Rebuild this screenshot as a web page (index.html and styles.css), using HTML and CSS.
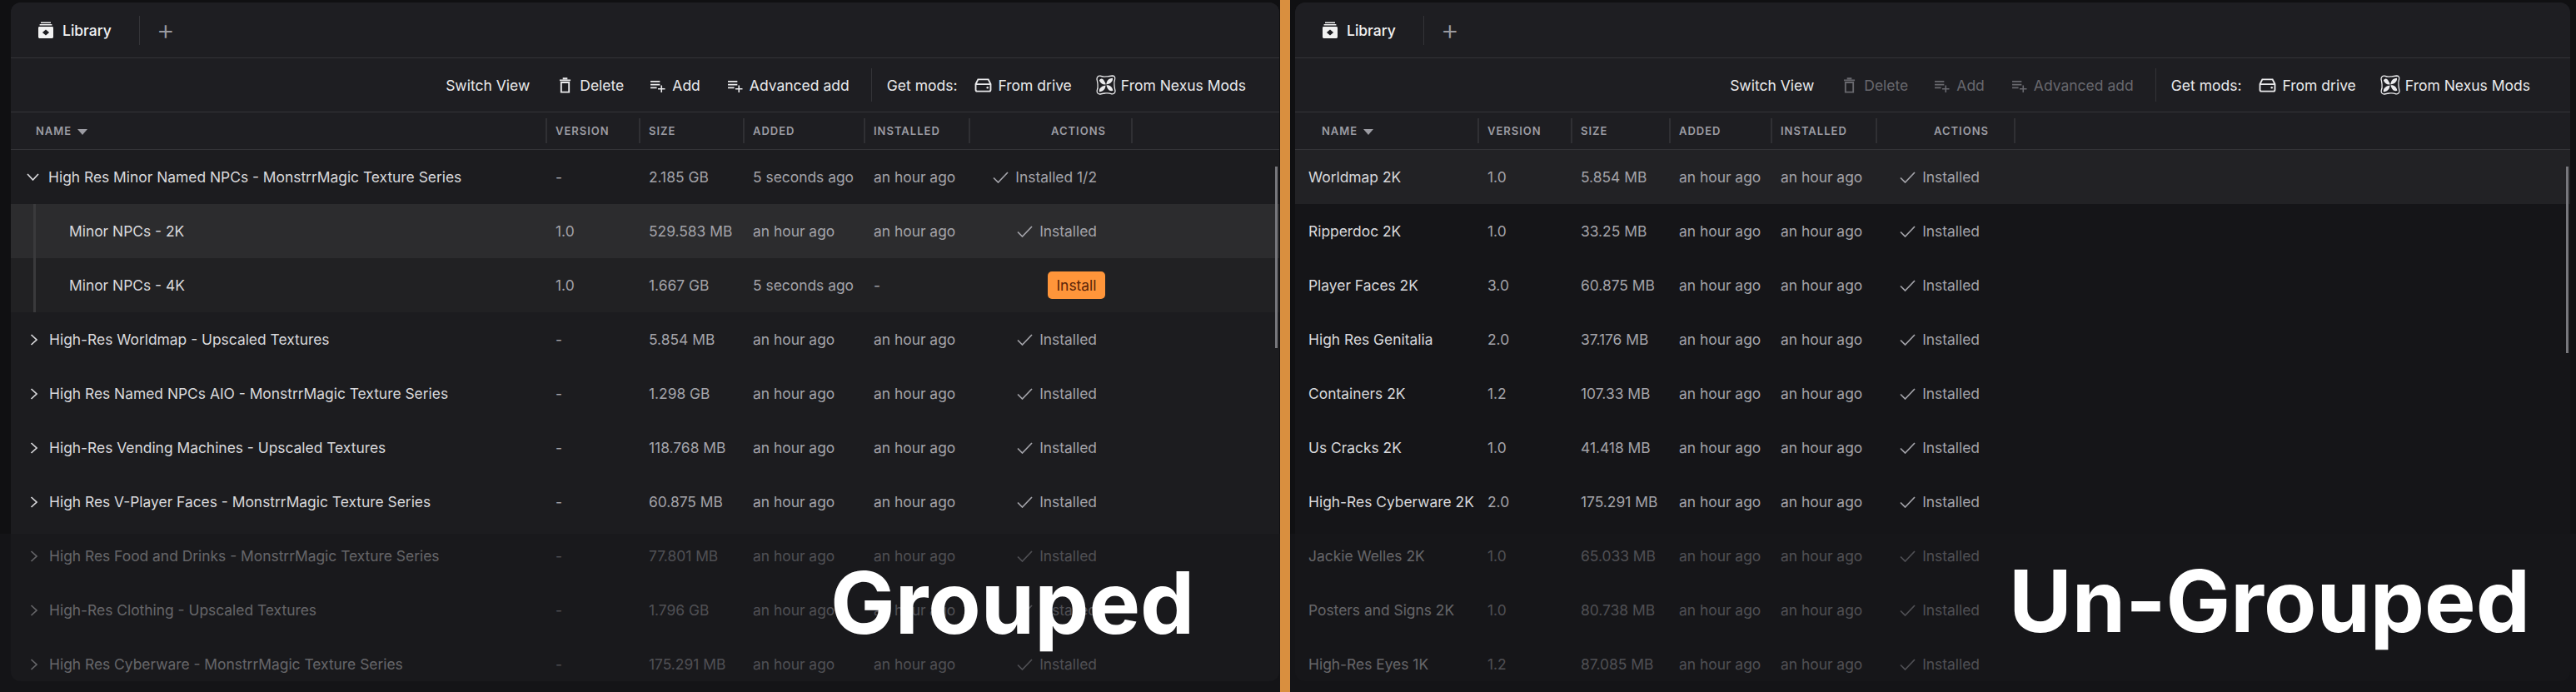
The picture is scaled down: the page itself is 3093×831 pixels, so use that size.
FILE: index.html
```html
<!DOCTYPE html>
<html>
 <head>
	<title>Library - grouped and un-grouped</title>
	<meta charset="UTF-8"/>
	<link rel="stylesheet" href="styles.css">
 </head>
 <body>
	<svg class="sprite" xmlns="http://www.w3.org/2000/svg">
		<symbol id="i-lib" viewBox="0 0 20 20"><path d="M4 0.5h12v1.4H4zM2.6 3h14.8v1.6H2.6z"/><path fill-rule="evenodd" d="M2 6h16a1.5 1.5 0 0 1 1 1.4V18.6A1.4 1.4 0 0 1 17.6 20H2.4A1.4 1.4 0 0 1 1 18.6V7.4A1.5 1.5 0 0 1 2 6zM10 9.4L5.9 13L10 16.6L14.1 13z"/></symbol>
		<symbol id="i-del" viewBox="0 0 16 20"><path d="M1 3.5h14M5 1.2h6M3 6.2h10V18.6H3z" fill="none" stroke="currentColor" stroke-width="2"/></symbol>
		<symbol id="i-add" viewBox="0 0 21 18"><path d="M1 3h12M1 7h12M1 11h8M15 8v9M10.5 12.5h9" fill="none" stroke="currentColor" stroke-width="1.7"/></symbol>
		<symbol id="i-drive" viewBox="0 0 22 18"><path d="M4.5 1.5h13L20.5 7.5V14.5a2 2 0 0 1-2 2H3.500a2 2 0 0 1-2-2V7.500zM1.500 7.500h19" fill="none" stroke="currentColor" stroke-width="2"/><circle cx="16.500" cy="12" r="1.300" fill="currentColor"/></symbol>
		<symbol id="i-nexus" viewBox="0 0 24 24"><path d="M5 1.200C8.500 2.600 11 2 13.500 1.800C15.500 1.600 17 1.400 19.500 1C22 1 23.200 2.800 22.600 5C21.400 8.500 21.800 11 22 13C22.200 15.500 22.600 17 23 19C23.200 21.800 21 23.200 18.800 22.800C15.500 21.400 13 21.800 11 22C8.500 22.200 7 22.600 5 23C2.400 23.200 .8 21.200 1.200 18.800C2.600 15.500 2.200 13 2 11C1.800 8.500 1.400 7 1 5C1 2.400 2.800 .8 5 1.200z" fill="none" stroke="currentColor" stroke-width="1.300"/><path d="M3.800 6.500C6 3.200 8.800 3.500 11.800 11.300C8.800 12 5.500 10.500 3.800 6.500zM12.300 11.500C12.800 7 15 4 20 3.800C20.600 7 18 11 12.300 11.500zM12.500 12.300C17 12 19.500 14.500 20.400 18.800C17 20.500 13.300 17.500 12.500 12.300zM11.500 12.600C11.300 17 9 19.800 4 20.600C3 17 6 13.300 11.500 12.600z" fill="currentColor"/></symbol>
		<symbol id="i-check" viewBox="0 0 19 14"><path d="M1 7.500L6.500 13L18 1" fill="none" stroke="currentColor" stroke-width="1.700"/></symbol>
		<symbol id="i-right" viewBox="0 0 10 14"><path d="M1.500 1L8 7L1.500 13" fill="none" stroke="currentColor" stroke-width="1.700"/></symbol>
		<symbol id="i-down" viewBox="0 0 15 9"><path d="M1 1L7.500 8L14 1" fill="none" stroke="currentColor" stroke-width="1.700"/></symbol>
	</svg>

	<div class="app">
		<!-- grouped view -->
		<div class="panel grouped">
			<div class="tabs">
				<div class="tab"><svg class="ico-lib"><use href="#i-lib"/></svg>Library</div>
				<div class="tab-plus">+</div>
			</div>
			<div class="toolbar">
				<span class="tool switch">Switch View</span>
				<span class="tool del"><svg class="ico-del"><use href="#i-del"/></svg>Delete</span>
				<span class="tool add"><svg class="ico-add"><use href="#i-add"/></svg>Add</span>
				<span class="tool adv"><svg class="ico-add"><use href="#i-add"/></svg>Advanced add</span>
				<span class="tool getmods">Get mods:</span>
				<span class="tool drive"><svg class="ico-drive"><use href="#i-drive"/></svg>From drive</span>
				<span class="tool nexus"><svg class="ico-nexus"><use href="#i-nexus"/></svg>From Nexus Mods</span>
			</div>
			<div class="row head">
				<div class="cell first">NAME <i class="sort"></i></div>
				<div class="cell">VERSION</div>
				<div class="cell">SIZE</div>
				<div class="cell">ADDED</div>
				<div class="cell">INSTALLED</div>
				<div class="cell act">ACTIONS</div>
			</div>
			<div class="row">
				<div class="cell name"><svg class="chev-down"><use href="#i-down"/></svg>High Res Minor Named NPCs - MonstrrMagic Texture Series</div>
				<div class="cell">-</div><div class="cell">2.185 GB</div><div class="cell">5 seconds ago</div><div class="cell">an hour ago</div>
				<div class="cell act"><span class="done"><svg class="check"><use href="#i-check"/></svg>Installed 1/2</span></div>
			</div>
			<div class="row child hover">
				<div class="cell name">Minor NPCs - 2K</div>
				<div class="cell">1.0</div><div class="cell">529.583 MB</div><div class="cell">an hour ago</div><div class="cell">an hour ago</div>
				<div class="cell act"><span class="done"><svg class="check"><use href="#i-check"/></svg>Installed</span></div>
			</div>
			<div class="row child">
				<div class="cell name">Minor NPCs - 4K</div>
				<div class="cell">1.0</div><div class="cell">1.667 GB</div><div class="cell">5 seconds ago</div><div class="cell">-</div>
				<div class="cell act"><button class="install">Install</button></div>
			</div>
			<div class="row">
				<div class="cell name"><svg class="chev"><use href="#i-right"/></svg>High-Res Worldmap - Upscaled Textures</div>
				<div class="cell">-</div><div class="cell">5.854 MB</div><div class="cell">an hour ago</div><div class="cell">an hour ago</div>
				<div class="cell act"><span class="done"><svg class="check"><use href="#i-check"/></svg>Installed</span></div>
			</div>
			<div class="row">
				<div class="cell name"><svg class="chev"><use href="#i-right"/></svg>High Res Named NPCs AIO - MonstrrMagic Texture Series</div>
				<div class="cell">-</div><div class="cell">1.298 GB</div><div class="cell">an hour ago</div><div class="cell">an hour ago</div>
				<div class="cell act"><span class="done"><svg class="check"><use href="#i-check"/></svg>Installed</span></div>
			</div>
			<div class="row">
				<div class="cell name"><svg class="chev"><use href="#i-right"/></svg>High-Res Vending Machines - Upscaled Textures</div>
				<div class="cell">-</div><div class="cell">118.768 MB</div><div class="cell">an hour ago</div><div class="cell">an hour ago</div>
				<div class="cell act"><span class="done"><svg class="check"><use href="#i-check"/></svg>Installed</span></div>
			</div>
			<div class="row">
				<div class="cell name"><svg class="chev"><use href="#i-right"/></svg>High Res V-Player Faces - MonstrrMagic Texture Series</div>
				<div class="cell">-</div><div class="cell">60.875 MB</div><div class="cell">an hour ago</div><div class="cell">an hour ago</div>
				<div class="cell act"><span class="done"><svg class="check"><use href="#i-check"/></svg>Installed</span></div>
			</div>
			<div class="row">
				<div class="cell name"><svg class="chev"><use href="#i-right"/></svg>High Res Food and Drinks - MonstrrMagic Texture Series</div>
				<div class="cell">-</div><div class="cell">77.801 MB</div><div class="cell">an hour ago</div><div class="cell">an hour ago</div>
				<div class="cell act"><span class="done"><svg class="check"><use href="#i-check"/></svg>Installed</span></div>
			</div>
			<div class="row">
				<div class="cell name"><svg class="chev"><use href="#i-right"/></svg>High-Res Clothing - Upscaled Textures</div>
				<div class="cell">-</div><div class="cell">1.796 GB</div><div class="cell">an hour ago</div><div class="cell">an hour ago</div>
				<div class="cell act"><span class="done"><svg class="check"><use href="#i-check"/></svg>Installed</span></div>
			</div>
			<div class="row">
				<div class="cell name"><svg class="chev"><use href="#i-right"/></svg>High Res Cyberware - MonstrrMagic Texture Series</div>
				<div class="cell">-</div><div class="cell">175.291 MB</div><div class="cell">an hour ago</div><div class="cell">an hour ago</div>
				<div class="cell act"><span class="done"><svg class="check"><use href="#i-check"/></svg>Installed</span></div>
			</div>
			<div class="scroll"></div>
		</div>

		<div class="split"></div>

		<!-- un-grouped view -->
		<div class="panel flat">
			<div class="tabs">
				<div class="tab"><svg class="ico-lib"><use href="#i-lib"/></svg>Library</div>
				<div class="tab-plus">+</div>
			</div>
			<div class="toolbar">
				<span class="tool switch">Switch View</span>
				<span class="tool del off"><svg class="ico-del"><use href="#i-del"/></svg>Delete</span>
				<span class="tool add off"><svg class="ico-add"><use href="#i-add"/></svg>Add</span>
				<span class="tool adv off"><svg class="ico-add"><use href="#i-add"/></svg>Advanced add</span>
				<span class="tool getmods">Get mods:</span>
				<span class="tool drive"><svg class="ico-drive"><use href="#i-drive"/></svg>From drive</span>
				<span class="tool nexus"><svg class="ico-nexus"><use href="#i-nexus"/></svg>From Nexus Mods</span>
			</div>
			<div class="row head">
				<div class="cell first">NAME <i class="sort"></i></div>
				<div class="cell">VERSION</div>
				<div class="cell">SIZE</div>
				<div class="cell">ADDED</div>
				<div class="cell">INSTALLED</div>
				<div class="cell act">ACTIONS</div>
			</div>
			<div class="row hover">
				<div class="cell name">Worldmap 2K</div>
				<div class="cell">1.0</div><div class="cell">5.854 MB</div><div class="cell">an hour ago</div><div class="cell">an hour ago</div>
				<div class="cell act"><span class="done"><svg class="check"><use href="#i-check"/></svg>Installed</span></div>
			</div>
			<div class="row">
				<div class="cell name">Ripperdoc 2K</div>
				<div class="cell">1.0</div><div class="cell">33.25 MB</div><div class="cell">an hour ago</div><div class="cell">an hour ago</div>
				<div class="cell act"><span class="done"><svg class="check"><use href="#i-check"/></svg>Installed</span></div>
			</div>
			<div class="row">
				<div class="cell name">Player Faces 2K</div>
				<div class="cell">3.0</div><div class="cell">60.875 MB</div><div class="cell">an hour ago</div><div class="cell">an hour ago</div>
				<div class="cell act"><span class="done"><svg class="check"><use href="#i-check"/></svg>Installed</span></div>
			</div>
			<div class="row">
				<div class="cell name">High Res Genitalia</div>
				<div class="cell">2.0</div><div class="cell">37.176 MB</div><div class="cell">an hour ago</div><div class="cell">an hour ago</div>
				<div class="cell act"><span class="done"><svg class="check"><use href="#i-check"/></svg>Installed</span></div>
			</div>
			<div class="row">
				<div class="cell name">Containers 2K</div>
				<div class="cell">1.2</div><div class="cell">107.33 MB</div><div class="cell">an hour ago</div><div class="cell">an hour ago</div>
				<div class="cell act"><span class="done"><svg class="check"><use href="#i-check"/></svg>Installed</span></div>
			</div>
			<div class="row">
				<div class="cell name">Us Cracks 2K</div>
				<div class="cell">1.0</div><div class="cell">41.418 MB</div><div class="cell">an hour ago</div><div class="cell">an hour ago</div>
				<div class="cell act"><span class="done"><svg class="check"><use href="#i-check"/></svg>Installed</span></div>
			</div>
			<div class="row">
				<div class="cell name">High-Res Cyberware 2K</div>
				<div class="cell">2.0</div><div class="cell">175.291 MB</div><div class="cell">an hour ago</div><div class="cell">an hour ago</div>
				<div class="cell act"><span class="done"><svg class="check"><use href="#i-check"/></svg>Installed</span></div>
			</div>
			<div class="row">
				<div class="cell name">Jackie Welles 2K</div>
				<div class="cell">1.0</div><div class="cell">65.033 MB</div><div class="cell">an hour ago</div><div class="cell">an hour ago</div>
				<div class="cell act"><span class="done"><svg class="check"><use href="#i-check"/></svg>Installed</span></div>
			</div>
			<div class="row">
				<div class="cell name">Posters and Signs 2K</div>
				<div class="cell">1.0</div><div class="cell">80.738 MB</div><div class="cell">an hour ago</div><div class="cell">an hour ago</div>
				<div class="cell act"><span class="done"><svg class="check"><use href="#i-check"/></svg>Installed</span></div>
			</div>
			<div class="row">
				<div class="cell name">High-Res Eyes 1K</div>
				<div class="cell">1.2</div><div class="cell">87.085 MB</div><div class="cell">an hour ago</div><div class="cell">an hour ago</div>
				<div class="cell act"><span class="done"><svg class="check"><use href="#i-check"/></svg>Installed</span></div>
			</div>
			<div class="scroll"></div>
		</div>

		<div class="fade"></div>
		<div class="label label-grouped">Grouped</div>
		<div class="label label-flat">Un-Grouped</div>
	</div>
 </body>
</html>
```

FILE: styles.css
```css
html, body {
  margin: 0;
  height: 100%;
  background: #101012;
  overflow: hidden;
}
body {
  font-family: "Inter", "Liberation Sans", sans-serif;
  font-size: 17.5px;
  color: #d9d9dc;
}
.sprite {
  display: none;
}
svg {
  display: block;
  flex: none;
}

.app {
  position: relative;
  display: flex;
  height: 831px;
  padding: 3px 7px 13px 13px;
  box-sizing: border-box;
}

.panel {
  position: relative;
  height: 815px;
  overflow: hidden;
  background: #1e1e22;
  border-radius: 12px;
}
.grouped {
  width: 1523px;
}
.flat {
  width: 1531px;
  background: #151518;
}
.split {
  width: 12px;
  margin: -3px 6px -13px 1px;
  background: #d98f3f;
  position: relative;
  z-index: 2;
}

/* tabs */
.tabs {
  height: 66px;
  display: flex;
  align-items: center;
  background: #1e1e22;
  border-bottom: 1px solid #343438;
}
.tab {
  display: flex;
  align-items: center;
  gap: 10px;
  padding: 0 33px 0 32px;
  height: 35px;
  color: #f2f2f2;
  font-weight: 500;
  border-right: 1px solid #343438;
}
.ico-lib {
  width: 20px;
  height: 20px;
  fill: #f2f2f2;
}
.tab-plus {
  margin-left: 20px;
  width: 20px;
  text-align: center;
  color: #9a9aa0;
  font-size: 34px;
  font-weight: 300;
  line-height: 30px;
}

/* toolbar */
.toolbar {
  height: 64px;
  display: flex;
  align-items: center;
  justify-content: flex-end;
  padding-right: 40px;
  background: #1e1e22;
  border-bottom: 1px solid #343438;
  color: #eaeaec;
}
.flat .toolbar {
  padding-right: 48px;
}
.tool {
  display: flex;
  align-items: center;
  gap: 10px;
  white-space: nowrap;
}
.off {
  color: #68686e;
}
.switch {
  margin-right: 35px;
}
.del {
  margin-right: 31px;
}
.add {
  margin-right: 32px;
}
.adv {
  padding-right: 26px;
  border-right: 1px solid #343438;
  height: 40px;
  margin-right: 18px;
}
.getmods {
  margin-right: 21px;
}
.drive {
  margin-right: 29px;
  gap: 7px;
}
.nexus {
  gap: 6px;
}
.ico-del {
  width: 15px;
  height: 19px;
}
.ico-add {
  width: 20px;
  height: 17px;
  margin-top: 3px;
}
.add, .adv {
  gap: 7px;
}
.ico-drive {
  width: 21px;
  height: 17px;
}
.ico-nexus {
  width: 24px;
  height: 24px;
}

/* table */
.row {
  display: grid;
  height: 65px;
  align-items: center;
  white-space: nowrap;
  color: #a3a3a9;
  font-size: 17.4px;
}
.grouped .row {
  grid-template-columns: 642px 112px 125px 145px 126px 197px;
  background: #1c1c1f;
}
.flat .row {
  grid-template-columns: 219px 112px 118px 122px 126px 168px;
}
.cell {
  padding-left: 12px;
  box-sizing: border-box;
}
.name {
  display: flex;
  align-items: center;
  padding-left: 16px;
  color: #d9d9dc;
}
.grouped .name {
  padding-left: 45px;
}
.chev {
  width: 10px;
  height: 14px;
  margin: 0 13px 0 -22px;
}
.chev-down {
  width: 15px;
  height: 9px;
  margin: 0 11px 0 -26px;
}
.act {
  display: flex;
  justify-content: flex-end;
  padding-right: 33px;
}
.done {
  display: flex;
  align-items: center;
  gap: 8px;
  padding-right: 10px;
}
.check {
  width: 19px;
  height: 14px;
}
.install {
  font: inherit;
  color: #5a2408;
  background: #ff953a;
  border: 0;
  border-radius: 5px;
  height: 33px;
  width: 69px;
  padding: 0;
}

.row.head {
  height: 44px;
  background: #1e1e22;
  border-bottom: 1px solid #343438;
  font-size: 13px;
  font-weight: 600;
  letter-spacing: 1px;
  color: #9c9ca3;
}
.head .cell {
  height: 30px;
  line-height: 30px;
  margin-top: -1px;
}
.head .cell:not(.first) {
  border-left: 2px solid #303034;
  padding-left: 10px;
}
.head .first {
  padding-left: 30px;
}
.flat .head .first {
  padding-left: 32px;
}
.head .act {
  border-right: 2px solid #303034;
  padding-right: 30px;
}
.sort {
  display: inline-block;
  width: 0;
  height: 0;
  margin-left: 3px;
  vertical-align: 0;
  border-left: 6px solid transparent;
  border-right: 6px solid transparent;
  border-top: 7px solid #9c9ca3;
}

.grouped .child {
  background: #212123;
  position: relative;
}
.grouped .child .name {
  padding-left: 70px;
}
.grouped .child.hover {
  background: #2c2c2e;
}
.flat .hover {
  background: #222225;
}
.child::before {
  content: "";
  position: absolute;
  left: 27px;
  top: 0;
  bottom: 0;
  width: 3px;
  background: #3a3a3c;
}

.scroll {
  position: absolute;
  top: 197px;
  right: 2px;
  width: 3px;
  height: 218px;
  background: #77777c;
}
.flat .scroll {
  height: 224px;
}

/* the lower rows are washed out under the captions */
.fade {
  position: absolute;
  left: 0;
  right: 0;
  top: 641px;
  bottom: 0;
  background: rgba(24, 24, 26, .6);
  z-index: 1;
}
.label {
  position: absolute;
  z-index: 3;
  color: #fff;
  font-size: 103.5px;
  font-weight: 700;
  line-height: 104px;
  white-space: nowrap;
}
.label-grouped {
  left: 997px;
  top: 672px;
}
.label-flat {
  left: 2412px;
  top: 670px;
}
```
